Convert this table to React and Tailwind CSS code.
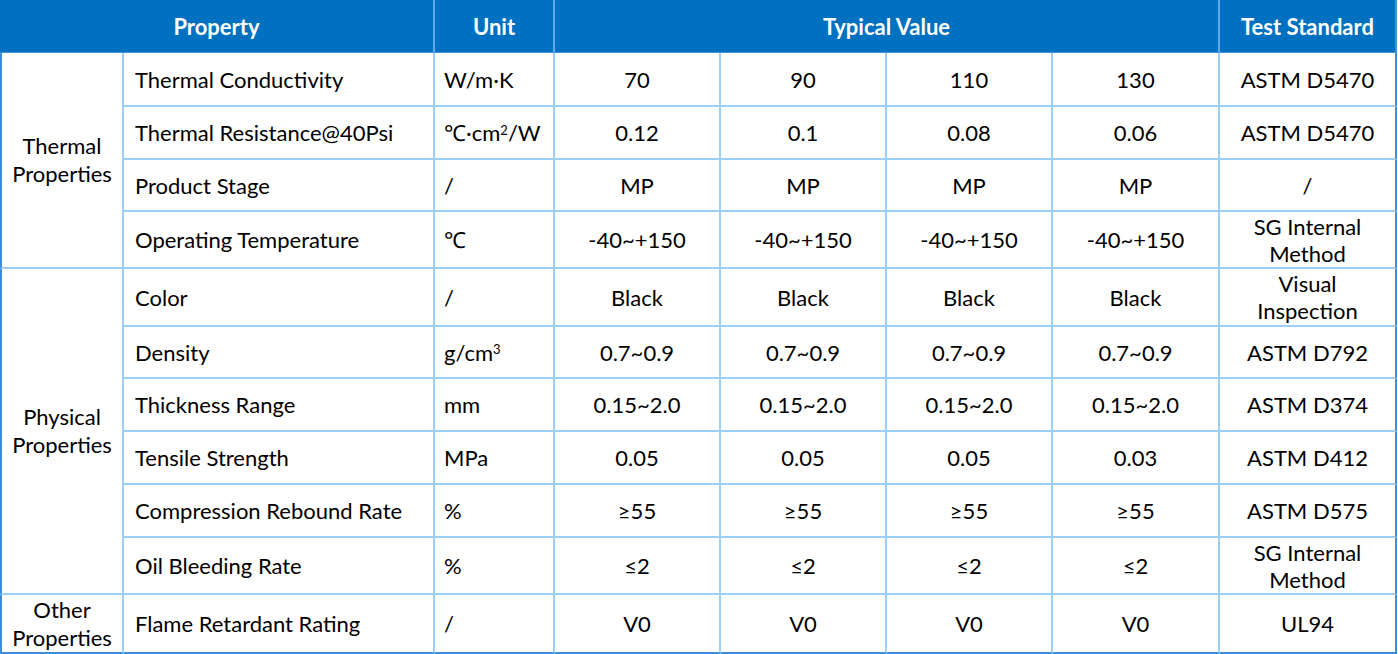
const groups = [
  {
    name: ['Thermal', 'Properties'],
    rows: [
      { h: 'h-[54px]', prop: 'Thermal Conductivity', unit: 'W/m·K', vals: ['70', '90', '110', '130'], std: ['ASTM D5470'] },
      { h: 'h-[53px]', prop: 'Thermal Resistance@40Psi', unit: <>℃·cm<sup className="text-[13px]">2</sup>/W</>, vals: ['0.12', '0.1', '0.08', '0.06'], std: ['ASTM D5470'] },
      { h: 'h-[52px]', prop: 'Product Stage', unit: '/', vals: ['MP', 'MP', 'MP', 'MP'], std: ['/'] },
      { h: 'h-[57px]', prop: 'Operating Temperature', unit: '℃', vals: ['-40~+150', '-40~+150', '-40~+150', '-40~+150'], std: ['SG Internal', 'Method'] },
    ],
  },
  {
    name: ['Physical', 'Properties'],
    rows: [
      { h: 'h-[58px]', prop: 'Color', unit: '/', vals: ['Black', 'Black', 'Black', 'Black'], std: ['Visual', 'Inspection'] },
      { h: 'h-[52px]', prop: 'Density', unit: <>g/cm<sup className="text-[13px]">3</sup></>, vals: ['0.7~0.9', '0.7~0.9', '0.7~0.9', '0.7~0.9'], std: ['ASTM D792'] },
      { h: 'h-[53px]', prop: 'Thickness Range', unit: 'mm', vals: ['0.15~2.0', '0.15~2.0', '0.15~2.0', '0.15~2.0'], std: ['ASTM D374'] },
      { h: 'h-[53px]', prop: 'Tensile Strength', unit: 'MPa', vals: ['0.05', '0.05', '0.05', '0.03'], std: ['ASTM D412'] },
      { h: 'h-[53px]', prop: 'Compression Rebound Rate', unit: '%', vals: ['≥55', '≥55', '≥55', '≥55'], std: ['ASTM D575'] },
      { h: 'h-[57px]', prop: 'Oil Bleeding Rate', unit: '%', vals: ['≤2', '≤2', '≤2', '≤2'], std: ['SG Internal', 'Method'] },
    ],
  },
  {
    name: ['Other', 'Properties'],
    rows: [
      { h: 'h-[59px]', prop: 'Flame Retardant Rating', unit: '/', vals: ['V0', 'V0', 'V0', 'V0'], std: ['UL94'] },
    ],
  },
]

export default function App() {
  const cell = 'border-r-2 border-b-2 border-[#9dcff6] align-middle'
  return (
    <div className="w-[1398px] h-[654px] overflow-hidden bg-white text-black text-[22px] leading-[27px]" style={{ fontFamily: 'Lato, "Open Sans", sans-serif' }}>
      <table className="table-fixed border-separate border-spacing-0 w-[1397px]">
        <colgroup>
          <col className="w-[124px]" />
          <col className="w-[311px]" />
          <col className="w-[120px]" />
          <col className="w-[166px]" />
          <col className="w-[166px]" />
          <col className="w-[166px]" />
          <col className="w-[167px]" />
          <col className="w-[177px]" />
        </colgroup>
        <thead>
          <tr className="h-[53px] bg-[#0070c0] text-white font-bold">
            <th colSpan={2} className="border-r-2 border-b border-[#5fa9e8] border-b-[#3f93da]">Property</th>
            <th className="border-r-2 border-b border-[#5fa9e8] border-b-[#3f93da]">Unit</th>
            <th colSpan={4} className="border-r-2 border-b border-[#5fa9e8] border-b-[#3f93da]">Typical Value</th>
            <th className="border-b border-r-2 border-b-[#3f93da] border-r-[#3f93da]">Test Standard</th>
          </tr>
        </thead>
        <tbody>
          {groups.map((g, gi) =>
            g.rows.map((r, ri) => {
              const last = gi === groups.length - 1
              const bottom = last ? 'border-b-[#3d8ed6]' : ''
              return (
                <tr key={r.prop} className={r.h}>
                  {ri === 0 && (
                    <td rowSpan={g.rows.length} className={`${cell} ${bottom} border-l-2 border-l-[#3d8ed6] text-center leading-[28px]`}>
                      {g.name[0]}
                      <br />
                      {g.name[1]}
                    </td>
                  )}
                  <td className={`${cell} ${bottom} pl-[11px] whitespace-nowrap`}>{r.prop}</td>
                  <td className={`${cell} ${bottom} pl-[9px] whitespace-nowrap`}>{r.unit}</td>
                  {r.vals.map((v, i) => (
                    <td key={i} className={`${cell} ${bottom} text-center`}>{v}</td>
                  ))}
                  <td className={`${cell} ${bottom} border-r-[#3d8ed6] text-center`}>
                    {r.std.map((s, i) => (
                      <div key={i}>{s}</div>
                    ))}
                  </td>
                </tr>
              )
            })
          )}
        </tbody>
      </table>
    </div>
  )
}
